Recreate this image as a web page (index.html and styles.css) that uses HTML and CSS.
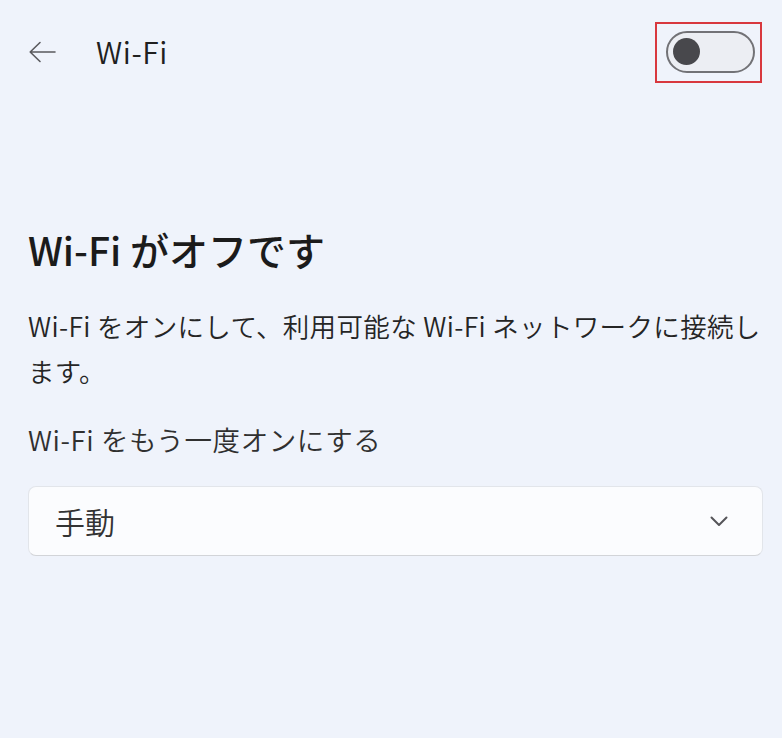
FILE: index.html
```html
<!DOCTYPE html>
<html lang="ja">
<head>
<meta charset="utf-8">
<link rel="stylesheet" href="styles.css">
</head>
<body>
<div class="page">
  <header class="topbar">
    <span class="back">
      <svg width="28" height="22" viewBox="0 0 28 22"><path d="M12 1.5 L2.2 11 L12 20.5 M2.2 11 H27" fill="none" stroke="#5a5a5e" stroke-width="1.6" stroke-linecap="round" stroke-linejoin="round"/></svg>
    </span>
    <span class="title">Wi-Fi</span>
    <span class="highlight">
      <span class="toggle"><span class="knob"></span></span>
    </span>
  </header>
  <main class="content">
    <h1 class="heading">Wi-Fi がオフです</h1>
    <p class="desc">Wi-Fi をオンにして、利用可能な Wi-Fi ネットワークに接続します。</p>
    <p class="label">Wi-Fi をもう一度オンにする</p>
    <div class="select">
      <span class="select-text">手動</span>
      <svg class="chevron" width="18" height="11" viewBox="0 0 18 11"><path d="M1.5 1.5 L9 9 L16.5 1.5" fill="none" stroke="#555559" stroke-width="2" stroke-linecap="round" stroke-linejoin="round"/></svg>
    </div>
  </main>
</div>
</body>
</html>
```
FILE: styles.css
```css
html, body {
  margin: 0;
  padding: 0;
}
body {
  background: #eff3fb;
  font-family: "Noto Sans CJK JP", "Noto Sans", sans-serif;
  color: #1f1f1f;
  width: 782px;
  height: 738px;
  overflow: hidden;
}
.page {
  padding: 21px 19px 0 28px;
}
.topbar {
  display: flex;
  align-items: center;
  height: 62px;
}
.back {
  display: flex;
  width: 28px;
  height: 22px;
}
.title {
  margin-left: 40px;
  font-size: 30px;
  font-weight: 350;
  letter-spacing: 0.6px;
  line-height: 1;
  color: #202020;
  position: relative;
  top: -1px;
}
.highlight {
  margin-left: auto;
  margin-right: 1px;
  border: 2px solid #d8383e;
  padding: 7px 5px 8px 9px;
  display: flex;
}
.toggle {
  box-sizing: border-box;
  width: 89px;
  height: 42px;
  border: 2px solid #727276;
  border-radius: 21px;
  background: #eceef3;
  display: flex;
  align-items: center;
  padding-left: 5px;
}
.knob {
  width: 27px;
  height: 27px;
  border-radius: 50%;
  background: #48484c;
}
.content {
  display: flex;
  flex-direction: column;
}
.heading {
  margin: 141px 0 0 0;
  font-size: 39px;
  font-weight: 500;
  line-height: 50px;
  color: #1b1b1b;
}
.desc {
  margin: 29px 0 0 0;
  font-size: 26.5px;
  font-weight: 350;
  letter-spacing: 0.35px;
  line-height: 45px;
  color: #252525;
}
.label {
  margin: 26px 0 0 0;
  font-size: 27.5px;
  font-weight: 350;
  letter-spacing: 0.6px;
  line-height: 40px;
  color: #303030;
}
.select {
  margin-top: 27px;
  box-sizing: border-box;
  height: 70px;
  background: #fbfcfe;
  border: 1px solid #e2e5ea;
  border-bottom-color: #d2d4d8;
  border-radius: 8px;
  display: flex;
  align-items: center;
  padding: 0 34px 0 26px;
}
.select-text {
  font-size: 30px;
  font-weight: 350;
  color: #333;
}
.chevron {
  margin-left: auto;
}
```
